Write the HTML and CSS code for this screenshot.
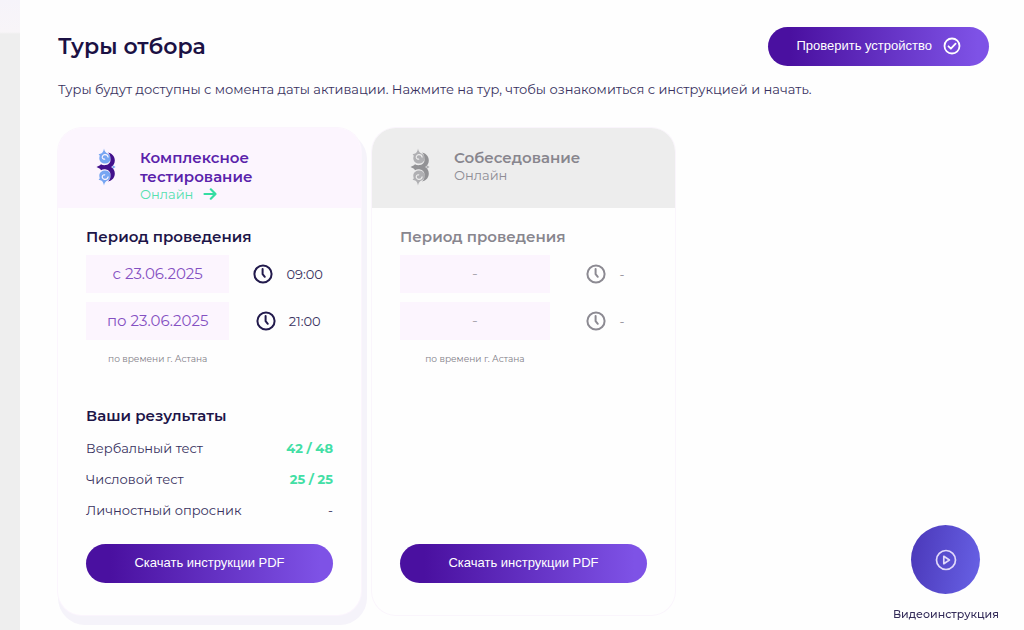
FILE: index.html
```html
<!DOCTYPE html>
<html lang="ru">
<head>
<meta charset="utf-8">
<meta name="viewport" content="width=device-width, initial-scale=1">
<title>Туры отбора</title>
<link rel="stylesheet" href="styles.css">
</head>
<body>
<svg class="defs" width="0" height="0" aria-hidden="true">
  <symbol id="clock" viewBox="0 0 20 20">
    <circle cx="10" cy="10" r="8.6" fill="none" stroke="currentColor" stroke-width="2"/>
    <path d="M9.600 5v5.200l2.200 2.600" fill="none" stroke="currentColor" stroke-width="2" stroke-linecap="round" stroke-linejoin="round"/>
  </symbol>
  <symbol id="ornament" viewBox="0 0 20 38">
    <path class="curl" d="M8 .5c.4 2.500 1.500 4 3.500 5 2.500 1 3.500 3 3.200 5.200-.4 3-2.700 4.800-5.500 4.800-3.200 0-5.800-2-5.900-5 0-1.200.2-2 .5-2.800L2.600 6.200l2.600-.6C6.800 4.600 7.600 3 8 .5z"/>
    <path class="curl" d="M8 37.500c.4-2.500 1.500-4 3.500-5 2.500-1 3.500-3 3.200-5.200-.4-3-2.700-4.800-5.500-4.800-3.200 0-5.800 2-5.900 5 0 1.200.2 2 .5 2.800l-1.200 1.500 2.600.6c1.600 1 2.400 2.600 2.800 5.100z"/>
    <path class="curl" d="M16.500 17l3 2-3 2z"/>
    <path class="gap" d="M12.200 9.500c-.3-2-1.800-3-3.500-2.800-1.800.2-2.700 1.600-2.400 3 .3 1.200 1.700 1.900 2.800 1.200M12.200 28.500c-.3 2-1.800 3-3.500 2.800-1.800-.2-2.700-1.600-2.400-3 .3-1.200 1.700-1.900 2.800-1.200"/>
    <path class="spine" d="M12 4.500c4.400 1 6.800 4 6.800 8 0 3-1.300 5-3.700 6.500 2.400 1.500 3.700 3.500 3.700 6.500 0 4-2.400 7-6.800 8 2.100-2 2.700-4 2.600-6.500-.1-3.200-1.900-5-4.600-5.500-1.800-.3-3.600-.1-5 .8L4 20.700.5 19 4 17.300l1-1.100c1.400.9 3.200 1.100 5 .8 2.700-.5 4.500-2.300 4.600-5.500.1-2.500-.5-5-2.600-7z"/>
  </symbol>
</svg>
<div class="app">
  <aside class="rail"></aside>
  <main class="page">
    <header class="page-head">
      <h1 class="page-title">Туры отбора</h1>
      <button class="btn btn-check" type="button">Проверить устройство
        <svg class="btn-icon" viewBox="0 0 18 18" aria-hidden="true"><g fill="none" stroke="currentColor" stroke-width="1.800" stroke-linecap="round" stroke-linejoin="round"><circle cx="9" cy="9" r="7.500"/><path d="M5.500 9.300l2.400 2.400 4.700-5"/></g></svg>
      </button>
    </header>
    <p class="lead">Туры будут доступны с момента даты активации. Нажмите на тур, чтобы ознакомиться с инструкцией и начать.</p>

    <div class="cards">
      <article class="card card-active">
        <header class="card-head">
          <svg class="ornament"><use href="#ornament"/></svg>
          <div>
            <h2 class="card-title">Комплексное тестирование</h2>
            <a class="mode" href="#">Онлайн
              <svg class="arrow" viewBox="0 0 14 12" aria-hidden="true"><path d="M1.500 6h11M7.800 1.300L12.500 6l-4.700 4.700" fill="none" stroke="currentColor" stroke-width="2.200" stroke-linecap="round" stroke-linejoin="round"/></svg>
            </a>
          </div>
        </header>
        <div class="card-body">
          <h3 class="section-title">Период проведения</h3>
          <div class="period">
            <span class="date">с 23.06.2025</span>
            <span class="time"><svg class="clock"><use href="#clock"/></svg><span>09:00</span></span>
            <span class="date">по 23.06.2025</span>
            <span class="time"><svg class="clock"><use href="#clock"/></svg><span>21:00</span></span>
            <small class="zone">по времени г. Астана</small>
          </div>
          <h3 class="section-title results-title">Ваши результаты</h3>
          <dl class="results">
            <div class="result"><dt>Вербальный тест</dt><dd class="score">42 / 48</dd></div>
            <div class="result"><dt>Числовой тест</dt><dd class="score">25 / 25</dd></div>
            <div class="result"><dt>Личностный опросник</dt><dd>-</dd></div>
          </dl>
          <button class="btn btn-wide" type="button">Скачать инструкции PDF</button>
        </div>
      </article>

      <article class="card card-muted">
        <header class="card-head">
          <svg class="ornament"><use href="#ornament"/></svg>
          <div>
            <h2 class="card-title">Собеседование</h2>
            <span class="mode">Онлайн</span>
          </div>
        </header>
        <div class="card-body">
          <h3 class="section-title">Период проведения</h3>
          <div class="period">
            <span class="date">-</span>
            <span class="time"><svg class="clock"><use href="#clock"/></svg><span>-</span></span>
            <span class="date">-</span>
            <span class="time"><svg class="clock"><use href="#clock"/></svg><span>-</span></span>
            <small class="zone">по времени г. Астана</small>
          </div>
          <button class="btn btn-wide" type="button">Скачать инструкции PDF</button>
        </div>
      </article>
    </div>
  </main>
  <button class="video" type="button">
    <span class="video-disc"><svg class="video-icon" viewBox="0 0 22 22" aria-hidden="true"><g fill="none" stroke="currentColor" stroke-width="1.700" stroke-linejoin="round"><circle cx="11" cy="11" r="9.500"/><path d="M8.800 7.300v7.400l5.600-3.700z"/></g></svg></span>
    <span>Видеоинструкция</span>
  </button>
</div>
</body>
</html>
```
FILE: styles.css
```css
* { box-sizing: border-box; }

body {
  margin: 0;
  background: #fefefe;
  color: #1d1548;
  font: 400 13px/20px Montserrat, Inter, "Noto Sans", sans-serif;
}

h1, h2, h3, p, dl, dd { margin: 0; }

button { border: 0; cursor: pointer; }

.defs { position: absolute; }

.app {
  display: flex;
  min-height: 100vh;
}

.rail {
  flex: 0 0 20px;
  background: linear-gradient(#f6f4fa 0, #f8f5f8 32px, #eeeeee 34px);
}

.page {
  flex: 1;
  min-width: 0;
  padding: 27px 35px 5px 38px;
  background: #fefefe;
}

.page-head {
  display: flex;
  align-items: center;
  justify-content: space-between;
}

.page-title {
  font-size: 22px;
  font-weight: 600;
  line-height: 28px;
  color: #1b1144;
}

.btn {
  display: flex;
  align-items: center;
  justify-content: center;
  height: 39px;
  padding: 0 28px 1px;
  border-radius: 20px;
  background: linear-gradient(90deg, #4a10a0 10%, #7e52e6 95%);
  color: #ffffff;
  font: 400 13px/20px "Liberation Sans", Arial, sans-serif;
}

.btn-check { gap: 11px; }

.btn-icon {
  width: 18px;
  height: 18px;
}

.lead {
  margin-top: 13px;
  color: #39325f;
}

.cards {
  display: grid;
  grid-template-columns: repeat(2, minmax(0, 303px));
  gap: 11px;
  margin-top: 29px;
}

.card {
  display: flex;
  flex-direction: column;
  min-height: 487px;
  border-radius: 24px;
  background: #fefefe;
}

.card-active {
  --curl: #77a6f2;
  --spine: #42108c;
  --head: #fcf5fe;
  box-shadow: 0 0 0 1px #fbf5fd, 3px 7px 0 3px #f5f3fa;
}

.card-muted {
  --curl: #b0b0b3;
  --spine: #929295;
  --head: #ededed;
  box-shadow: 0 0 0 1px #faf5fc;
  color: #8e8c95;
}

.card-head {
  display: flex;
  min-height: 80px;
  padding: 20px 28px 5px 38px;
  gap: 24px;
  border-radius: 24px 24px 0 0;
  background: var(--head);
}

.ornament {
  flex: none;
  width: 20px;
  height: 38px;
}

.curl { fill: var(--curl); }
.spine { fill: var(--spine); }
.gap { fill: none; stroke: var(--head); stroke-width: 1.2; }

.card-title {
  font-size: 15px;
  font-weight: 600;
  line-height: 19px;
  color: #5a22ab;
}

.card-muted .card-title { color: #88868e; }

.mode {
  display: flex;
  align-items: center;
  gap: 10px;
  line-height: 16px;
  color: #55e0ae;
  text-decoration: none;
}

.card-muted .mode { color: #8e8c95; }

.arrow {
  width: 14px;
  height: 12px;
  color: #35dda2;
}

.card-body {
  display: flex;
  flex: 1;
  flex-direction: column;
  padding: 19px 28px 32px;
}

.section-title {
  font-size: 15px;
  font-weight: 600;
  line-height: 20px;
}

.card-muted .section-title { color: #88868e; }

.period {
  display: grid;
  grid-template-columns: 8fr 5fr;
  gap: 9px 14px;
  margin-top: 8px;
}

.card-muted .period { grid-template-columns: 9fr 5fr; }

.date {
  display: flex;
  align-items: center;
  justify-content: center;
  height: 38px;
  background: #fcf5fe;
  color: #8450c2;
  font-size: 15px;
}

.card-muted .date { color: #aaa7b0; }

.time {
  display: flex;
  align-items: center;
  justify-content: center;
  gap: 13px;
  color: #39325f;
}

.card-muted .time { color: #8e8c95; }

.clock {
  width: 20px;
  height: 20px;
  color: #221a4c;
}

.card-muted .clock { color: #8c8a92; }

.zone {
  font-size: 9px;
  line-height: 20px;
  text-align: center;
  color: #7f7d86;
}

.results-title { margin-top: 37px; }

.results {
  display: grid;
  gap: 11px;
  margin: 12px 0 24px;
}

.result {
  display: flex;
  justify-content: space-between;
  color: #39325f;
}

.result .score {
  font-weight: 700;
  color: #43dfa5;
}

.btn-wide {
  width: 100%;
  margin-top: auto;
}

.video {
  position: fixed;
  right: 25px;
  bottom: 6px;
  display: flex;
  flex-direction: column;
  align-items: center;
  gap: 10px;
  padding: 0;
  background: none;
  color: #352d5a;
  font: 500 11px/20px Montserrat, Inter, "Noto Sans", sans-serif;
}

.video-disc {
  display: grid;
  place-items: center;
  width: 69px;
  height: 69px;
  border-radius: 50%;
  background: linear-gradient(100deg, #4a37b8, #6862e6);
  color: #e2d9fa;
}

.video-icon {
  width: 22px;
  height: 22px;
}
```
